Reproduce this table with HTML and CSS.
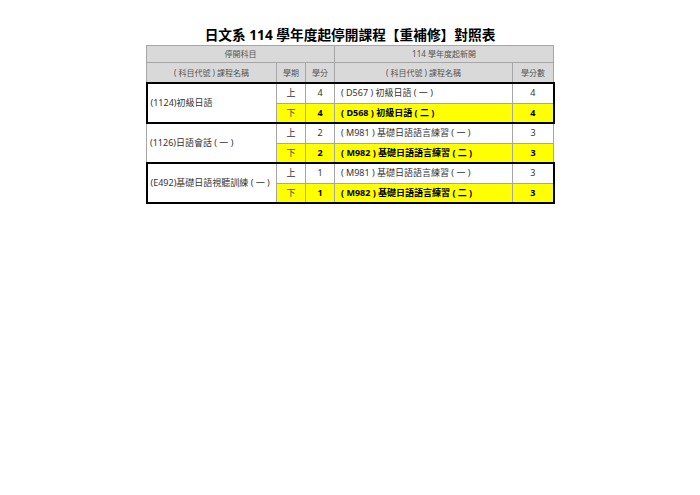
FILE: index.html
```html
<!DOCTYPE html>
<html lang="zh-Hant">
<head>
<meta charset="utf-8">
<link rel="stylesheet" href="styles.css">
</head>
<body>
<h1 class="title">日文系 114 學年度起停開課程【重補修】對照表</h1>
<table class="grid">
  <colgroup>
    <col class="c1"><col class="c2"><col class="c3"><col class="c4"><col class="c5">
  </colgroup>
  <thead>
    <tr class="h1row"><th colspan="3">停開科目</th><th colspan="2">114 學年度起新開</th></tr>
    <tr class="h2row"><th>( 科目代號 ) 課程名稱</th><th>學期</th><th>學分</th><th>( 科目代號 ) 課程名稱</th><th>學分數</th></tr>
  </thead>
  <tbody class="thick">
    <tr><td rowspan="2" class="name">(1124)初級日語</td><td class="ctr">上</td><td class="ctr">4</td><td class="course">( D567 ) 初級日語 ( 一 )</td><td class="ctr">4</td></tr>
    <tr class="hl"><td class="ctr sem">下</td><td class="ctr">4</td><td class="course">( D568 ) 初級日語 ( 二 )</td><td class="ctr">4</td></tr>
  </tbody>
  <tbody class="thin">
    <tr><td rowspan="2" class="name">(1126)日語會話 ( 一 )</td><td class="ctr">上</td><td class="ctr">2</td><td class="course">( M981 ) 基礎日語語言練習 ( 一 )</td><td class="ctr">3</td></tr>
    <tr class="hl"><td class="ctr sem">下</td><td class="ctr">2</td><td class="course">( M982 ) 基礎日語語言練習 ( 二 )</td><td class="ctr">3</td></tr>
  </tbody>
  <tbody class="thick">
    <tr><td rowspan="2" class="name">(E492)基礎日語視聽訓練 ( 一 )</td><td class="ctr">上</td><td class="ctr">1</td><td class="course">( M981 ) 基礎日語語言練習 ( 一 )</td><td class="ctr">3</td></tr>
    <tr class="hl"><td class="ctr sem">下</td><td class="ctr">1</td><td class="course">( M982 ) 基礎日語語言練習 ( 二 )</td><td class="ctr">3</td></tr>
  </tbody>
</table>
</body>
</html>
```
FILE: styles.css
```css
html, body {
  margin: 0;
  padding: 0;
  background: #fff;
}
body {
  font-family: "Noto Sans", "Noto Sans CJK TC", sans-serif;
  color: #333;
}
.title {
  margin: 25px 0 0 0;
  height: 20px;
  line-height: 20px;
  font-size: 13.7px;
  font-weight: bold;
  text-align: center;
  color: #000;
  font-family: "Noto Sans", "Noto Sans CJK TC", sans-serif;
}
.grid {
  margin: 0 auto;
  border-collapse: collapse;
  table-layout: fixed;
  width: 407px;
  font-size: 9px;
}
.c1 { width: 130px; }
.c2 { width: 29px; }
.c3 { width: 29px; }
.c4 { width: 178px; }
.c5 { width: 41px; }
th, td {
  border: 1px solid #a6a6a6;
  padding: 0;
  white-space: nowrap;
  overflow: hidden;
  line-height: 12px;
}
th {
  background: #d9d9d9;
  font-weight: normal;
  color: #555;
  font-size: 8px;
}
.h1row th { height: 16px; }
.h2row th { height: 19px; }
td { height: 18.5px; }
tbody.thick {
  border: 2px solid #000;
}
.name {
  text-align: left;
  padding-left: 3px;
  color: #333;
}
.ctr { text-align: center; }
.course { padding-left: 6px; }
.hl td {
  background: #ffff00;
  font-weight: bold;
  color: #000;
}
.hl td.sem {
  font-weight: normal;
  color: #444;
}
```
